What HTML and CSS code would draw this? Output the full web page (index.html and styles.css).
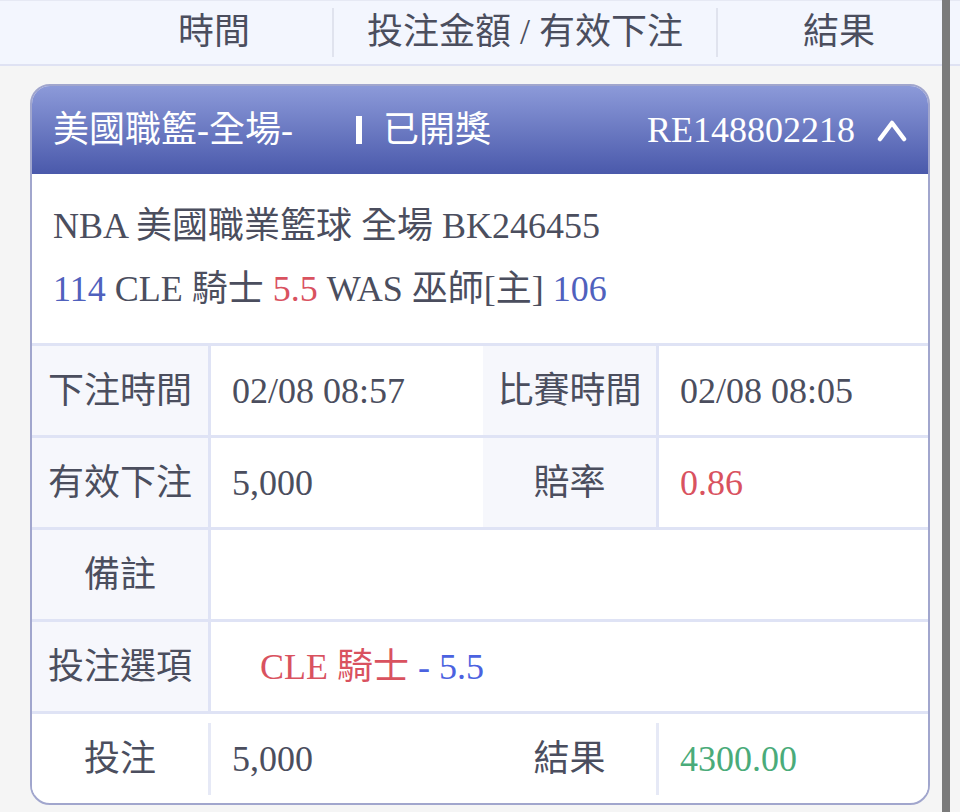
FILE: index.html
```html
<!DOCTYPE html>
<html lang="zh-Hant">
<head>
  <meta charset="UTF-8">
  <title>注單詳情</title>
  <link rel="stylesheet" href="styles.css">
</head>
<body>
  <div class="topbar">
    <div class="th th-time">時間</div>
    <div class="th th-amount">投注金額 / 有效下注</div>
    <div class="th th-result">結果</div>
  </div>

  <div class="content">
    <div class="card">
      <div class="card-head">
        <span class="league">美國職籃-全場-</span>
        <span class="status-bar"></span>
        <span class="status">已開獎</span>
        <span class="order-no">RE148802218</span>
        <svg class="chevron" width="30" height="24" viewBox="0 0 30 24">
          <polyline points="3,21 15,5 27,21" fill="none" stroke="#fff" stroke-width="4.5" stroke-linecap="round" stroke-linejoin="round"/>
        </svg>
      </div>

      <div class="card-info">
        <div>NBA 美國職業籃球 全場 BK246455</div>
        <div><span class="blue">114</span> CLE 騎士 <span class="red">5.5</span> WAS 巫師[主] <span class="blue">106</span></div>
      </div>

      <!-- 注單明細 -->
      <div class="detail">
        <div class="row">
          <div class="cell label">下注時間</div>
          <div class="cell value">02/08 08:57</div>
          <div class="cell label label-2">比賽時間</div>
          <div class="cell value value-2">02/08 08:05</div>
        </div>
        <div class="row">
          <div class="cell label">有效下注</div>
          <div class="cell value">5,000</div>
          <div class="cell label label-2">賠率</div>
          <div class="cell value value-2 red">0.86</div>
        </div>
        <div class="row">
          <div class="cell label">備註</div>
          <div class="cell value value-wide"></div>
        </div>
        <div class="row">
          <div class="cell label">投注選項</div>
          <div class="cell value value-wide">
            <span class="pick"><span class="red">CLE 騎士</span> <span class="pick-line">- 5.5</span></span>
          </div>
        </div>
        <div class="row row-total">
          <div class="cell label">投注</div>
          <div class="cell value">5,000</div>
          <div class="cell label label-2">結果</div>
          <div class="cell value value-2 green">4300.00</div>
        </div>
      </div>
    </div>
  </div>

  <div class="scrollbar"></div>
</body>
</html>
```

FILE: styles.css
```css
* {
  box-sizing: border-box;
}
body {
  margin: 0;
  background: #f5f5f5;
  font-family: "Liberation Serif", "Noto Sans CJK TC", serif;
  font-size: 36px;
  color: #4b4e5e;
}

/* top header */
.topbar {
  display: flex;
  align-items: center;
  height: 66px;
  background: #f3f6fe;
  border-top: 1px solid #e6e9f4;
  border-bottom: 2px solid #dfe2f3;
}
.th {
  display: flex;
  align-items: center;
  justify-content: center;
  height: 49px;
  line-height: 49px;
}
.th-time {
  margin-left: 96px;
  width: 238px;
  border-right: 2px solid #e0e3ee;
}
.th-amount {
  width: 384px;
  border-right: 2px solid #e0e3ee;
}
.th-result {
  flex: 1;
}

.content {
  padding: 18px 30px 6px;
}
.card {
  background: #fff;
  border: 2px solid #a1a6cd;
  border-radius: 20px;
  overflow: hidden;
}
.card-head {
  display: flex;
  align-items: center;
  height: 88px;
  padding: 0 21px;
  background: linear-gradient(#8c9ad9, #4a59ab);
  color: #fff;
  line-height: 40px;
}
.league {
  width: 303px;
}
.status-bar {
  width: 6px;
  height: 28px;
  background: #fff;
  margin-right: 21px;
}
.order-no {
  margin-left: auto;
}
.chevron {
  margin-left: 22px;
}

.card-info {
  height: 169px;
  padding: 21px 21px 0;
  line-height: 63px;
}
.blue {
  color: #5061bd;
}
.red {
  color: #d9525f;
}
.green {
  color: #4aab7a;
}

/* detail table */
.row {
  display: flex;
  height: 92px;
  border-top: 3px solid #dfe3f5;
}
.cell {
  display: flex;
  align-items: center;
  line-height: 40px;
}
.label {
  width: 179px;
  justify-content: center;
  background: #f6f7fc;
  border-right: 3px solid #dfe3f5;
}
.label-2 {
  width: 176px;
}
.value {
  width: 272px;
  padding-left: 21px;
}
.value-2,
.value-wide {
  flex: 1;
}
.pick {
  margin-left: 28px;
}
.pick-line {
  color: #4b62e0;
}

.row-total {
  align-items: center;
}
.row-total .cell {
  height: 72px;
  background: #fff;
}
.row-total .label {
  border-right: 3px solid #e6e9f6;
}

.scrollbar {
  position: fixed;
  top: 0;
  left: 942px;
  width: 8px;
  height: 100%;
  background: #7b7b7b;
}
```
